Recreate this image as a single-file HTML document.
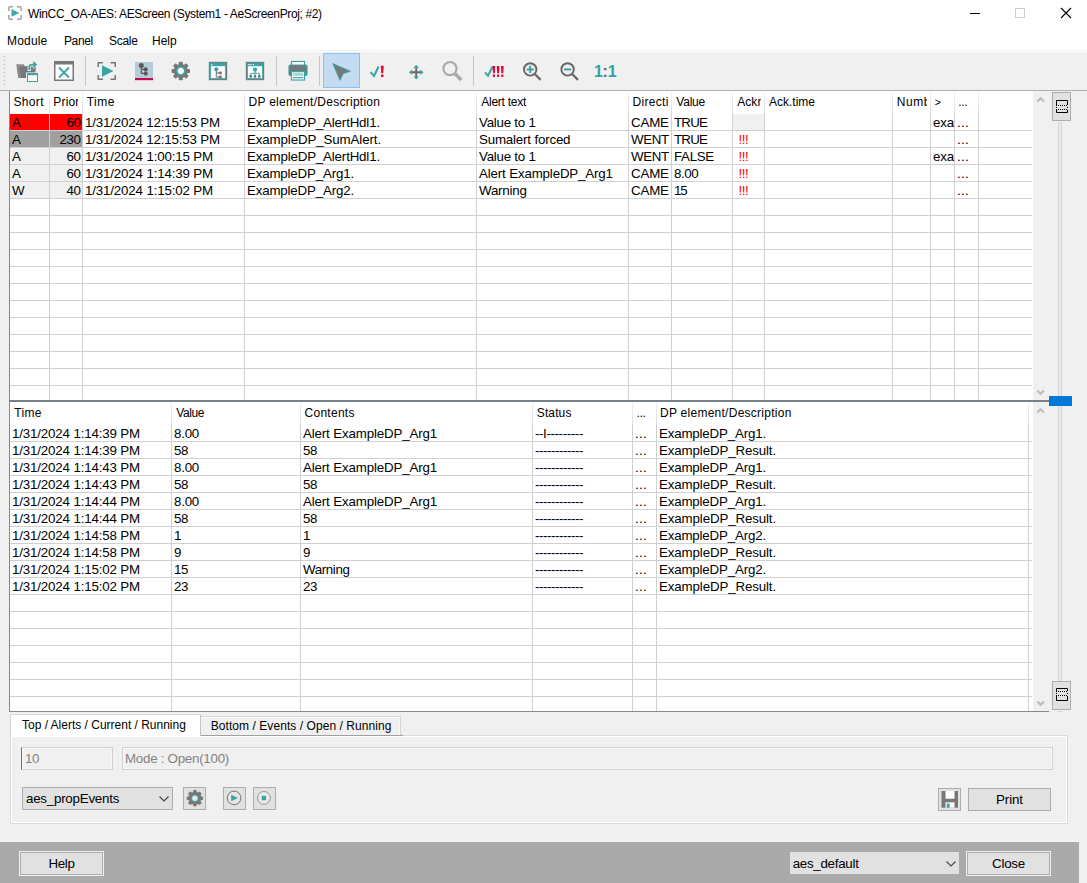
<!DOCTYPE html>
<html><head><meta charset="utf-8"><title>WinCC_OA-AES: AEScreen</title>
<style>
html,body{margin:0;padding:0;}
body{width:1087px;height:883px;overflow:hidden;background:#f0f0f0;position:relative;font-family:"Liberation Sans",sans-serif;font-size:13.333px;color:#000;}
.abs{position:absolute;}
.t{position:absolute;white-space:nowrap;line-height:17px;height:17px;}
.h{overflow:hidden;}
.hl{position:absolute;height:1px;background:#d0d0d0;}
.vl{position:absolute;width:1px;background:#d0d0d0;}
.vh{position:absolute;width:1px;background:linear-gradient(#f4f4f4,#dcdcdc);}
.btn{position:absolute;box-sizing:border-box;border:1px solid #adadad;background:#e1e1e1;text-align:center;}
.sep{position:absolute;width:1px;top:56px;height:30px;background:#c6c6c6;}
svg{position:absolute;overflow:visible;}
</style></head><body>

<div class="abs" style="left:0;top:0;width:1087px;height:52px;background:#fff"></div>
<div class="abs" style="left:0;top:50px;width:1087px;height:1px;background:#f0f0f0"></div>
<svg style="left:8px;top:6px" width="14" height="14" viewBox="0 0 14 14"><path d="M0.8 5V2Q0.8 0.8 2 0.8H5M9 0.8H12Q13.2 0.8 13.2 2V5M13.2 9V12Q13.2 13.2 12 13.2H9M5 13.2H2Q0.8 13.2 0.8 12V9" fill="none" stroke="#a4a4a4" stroke-width="1.5"/><path d="M3.5 3L11.3 7L3.5 10.8Z" fill="#41a9a7"/></svg>
<div class="t" id="title" style="left:28px;top:6px;font-size:12px;letter-spacing:-0.36px">WinCC_OA-AES: AEScreen (System1 - AeScreenProj; #2)</div>
<div class="abs" style="left:970px;top:13px;width:10px;height:1px;background:#000"></div>
<div class="abs" style="left:1015px;top:8px;width:10px;height:10px;box-sizing:border-box;border:1px solid #ccc"></div>
<svg style="left:1061px;top:8px" width="10" height="10" viewBox="0 0 10 10"><path d="M0 0L10 10M10 0L0 10" stroke="#000" stroke-width="1.1" fill="none"/></svg>
<div class="t menu" style="left:7px;top:33px;font-size:12px;letter-spacing:0.18px">Module</div>
<div class="t menu" style="left:64px;top:33px;font-size:12px;letter-spacing:-0.4px">Panel</div>
<div class="t menu" style="left:109px;top:33px;font-size:12px;letter-spacing:-0.3px">Scale</div>
<div class="t menu" style="left:152px;top:33px;font-size:12px;letter-spacing:0px">Help</div>
<div class="abs" style="left:0;top:52px;width:1087px;height:38px;background:#f0f0f0"></div>
<div class="abs" style="left:0;top:90px;width:1087px;height:1px;background:#b0b0b0"></div>
<div class="abs" style="left:3px;top:55px;width:2px;height:2px;background:#fff"></div><div class="abs" style="left:4px;top:56px;width:1px;height:1px;background:#c2c2c2"></div><div class="abs" style="left:3px;top:56px;width:1px;height:1px;background:#d4d4d4"></div><div class="abs" style="left:4px;top:55px;width:1px;height:1px;background:#d4d4d4"></div>
<div class="abs" style="left:3px;top:59px;width:2px;height:2px;background:#fff"></div><div class="abs" style="left:4px;top:60px;width:1px;height:1px;background:#c2c2c2"></div><div class="abs" style="left:3px;top:60px;width:1px;height:1px;background:#d4d4d4"></div><div class="abs" style="left:4px;top:59px;width:1px;height:1px;background:#d4d4d4"></div>
<div class="abs" style="left:3px;top:63px;width:2px;height:2px;background:#fff"></div><div class="abs" style="left:4px;top:64px;width:1px;height:1px;background:#c2c2c2"></div><div class="abs" style="left:3px;top:64px;width:1px;height:1px;background:#d4d4d4"></div><div class="abs" style="left:4px;top:63px;width:1px;height:1px;background:#d4d4d4"></div>
<div class="abs" style="left:3px;top:67px;width:2px;height:2px;background:#fff"></div><div class="abs" style="left:4px;top:68px;width:1px;height:1px;background:#c2c2c2"></div><div class="abs" style="left:3px;top:68px;width:1px;height:1px;background:#d4d4d4"></div><div class="abs" style="left:4px;top:67px;width:1px;height:1px;background:#d4d4d4"></div>
<div class="abs" style="left:3px;top:71px;width:2px;height:2px;background:#fff"></div><div class="abs" style="left:4px;top:72px;width:1px;height:1px;background:#c2c2c2"></div><div class="abs" style="left:3px;top:72px;width:1px;height:1px;background:#d4d4d4"></div><div class="abs" style="left:4px;top:71px;width:1px;height:1px;background:#d4d4d4"></div>
<div class="abs" style="left:3px;top:75px;width:2px;height:2px;background:#fff"></div><div class="abs" style="left:4px;top:76px;width:1px;height:1px;background:#c2c2c2"></div><div class="abs" style="left:3px;top:76px;width:1px;height:1px;background:#d4d4d4"></div><div class="abs" style="left:4px;top:75px;width:1px;height:1px;background:#d4d4d4"></div>
<div class="abs" style="left:3px;top:79px;width:2px;height:2px;background:#fff"></div><div class="abs" style="left:4px;top:80px;width:1px;height:1px;background:#c2c2c2"></div><div class="abs" style="left:3px;top:80px;width:1px;height:1px;background:#d4d4d4"></div><div class="abs" style="left:4px;top:79px;width:1px;height:1px;background:#d4d4d4"></div>
<div class="abs" style="left:3px;top:83px;width:2px;height:2px;background:#fff"></div><div class="abs" style="left:4px;top:84px;width:1px;height:1px;background:#c2c2c2"></div><div class="abs" style="left:3px;top:84px;width:1px;height:1px;background:#d4d4d4"></div><div class="abs" style="left:4px;top:83px;width:1px;height:1px;background:#d4d4d4"></div>
<div class="sep" style="left:85px"></div>
<div class="sep" style="left:276px"></div>
<div class="sep" style="left:319px"></div>
<div class="sep" style="left:473px"></div>
<!-- toolbar icons -->
<svg style="left:0;top:0" width="1087" height="90" viewBox="0 0 1087 90">
<!-- 1 open folder w/ arrow + window -->
<g>
<path d="M16.5 64.3H23.6l1.2 2H33.4v4H17Z" fill="#8c8c8c"/>
<path d="M19.2 66.4H36L34.6 78H18.4L17.2 70Z" fill="#777"/>
<path d="M16.5 64.3L18.4 78H21L19.4 66.4Z" fill="#8a8a8a"/>
<path d="M29.2 71v-3.4q0-3 3-3h1.6" fill="none" stroke="#f0f0f0" stroke-width="3.4"/>
<path d="M32.9 60L38.3 64.6L32.9 69.2Z" fill="#f0f0f0"/>
<path d="M29.2 70v-2.6q0-2.8 2.8-2.8h1.8" fill="none" stroke="#3aa5a5" stroke-width="1.7"/>
<path d="M33.3 61L37.2 64.6L33.3 68.2Z" fill="#3aa5a5"/>
<rect x="26" y="72.4" width="12.6" height="10.2" fill="#f0f0f0"/>
<rect x="27.5" y="73.5" width="10" height="8" fill="#fff" stroke="#3aa5a5" stroke-width="1"/>
<rect x="27" y="73" width="11" height="2.2" fill="#3aa5a5"/>
</g>
<!-- 2 window with X -->
<g>
<rect x="54.75" y="61.75" width="18.5" height="18.5" fill="#fff" stroke="#777" stroke-width="1.5"/>
<rect x="54" y="61" width="20" height="3.5" fill="#777"/>
<path d="M59 67.5L69 77.5M69 67.5L59 77.5" stroke="#3aa5a5" stroke-width="1.9" fill="none"/>
</g>
<!-- 3 bracket play -->
<g>
<path d="M98.25 67V62.75H103M110.5 62.75H115.25V67M115.25 75V79.25H110.5M103 79.25H98.25V75" fill="none" stroke="#777" stroke-width="1.5"/>
<path d="M102 65.2L113.5 71L102 76.8Z" fill="#3aa5a5"/>
</g>
<!-- 4 tree on blue -->
<g>
<rect x="135" y="62" width="18" height="16.5" fill="#b6ccd9"/>
<rect x="135" y="78" width="18" height="2.2" fill="#c4074f"/>
<path d="M141.3 66V73.4H145M141.3 69.4H145" fill="none" stroke="#5a5a5a" stroke-width="1.1"/>
<circle cx="141.3" cy="65.6" r="2.5" fill="#5a5a5a"/>
<circle cx="145.7" cy="69.4" r="2.1" fill="#5a5a5a"/>
<circle cx="145.7" cy="73.6" r="2.1" fill="#5a5a5a"/>
</g>
<!-- 5 gear -->
<g transform="translate(180.8 71)">
<g fill="#777">
<circle r="7.1"/>
<rect x="-2" y="-9.2" width="4" height="18.4" rx="0.8"/>
<rect x="-2" y="-9.2" width="4" height="18.4" rx="0.8" transform="rotate(45)"/>
<rect x="-2" y="-9.2" width="4" height="18.4" rx="0.8" transform="rotate(90)"/>
<rect x="-2" y="-9.2" width="4" height="18.4" rx="0.8" transform="rotate(135)"/>
</g>
<circle r="4" fill="#fff" stroke="#3aa5a5" stroke-width="1.7"/>
</g>
<!-- 6 window with tree -->
<g>
<rect x="209.5" y="62.5" width="17" height="17" fill="#fff" stroke="#6a7f7f" stroke-width="1.4"/><rect x="210.6" y="63.6" width="14.8" height="14.8" fill="none" stroke="#3aa5a5" stroke-width="0.9"/>
<rect x="210" y="63" width="16" height="3.2" fill="#3aa5a5"/>
<rect x="211.3" y="64" width="1.2" height="1.2" fill="#fff"/>
<path d="M216.3 70V77H219M216.3 73H219" fill="none" stroke="#777" stroke-width="1.1"/>
<circle cx="216.3" cy="69.3" r="2.1" fill="#3aa5a5"/>
<rect x="218.6" y="71.6" width="3.2" height="2.6" fill="#777"/>
<rect x="218.6" y="75.6" width="3.2" height="2.6" fill="#777"/>
</g>
<!-- 7 window with org chart -->
<g>
<rect x="246.5" y="62.5" width="17" height="17" fill="#fff" stroke="#6a7f7f" stroke-width="1.4"/><rect x="247.6" y="63.6" width="14.8" height="14.8" fill="none" stroke="#3aa5a5" stroke-width="0.9"/>
<rect x="247" y="63" width="16" height="3.2" fill="#3aa5a5"/>
<rect x="248.3" y="64" width="1.2" height="1.2" fill="#fff"/><rect x="250.3" y="64" width="1.2" height="1.2" fill="#fff"/><rect x="252.8" y="64" width="1.2" height="1.2" fill="#fff"/>
<path d="M255 70V75M250.7 75.5V73.3H259.3V75.5" fill="none" stroke="#3aa5a5" stroke-width="1"/>
<circle cx="255" cy="69.6" r="2.1" fill="#3aa5a5"/>
<rect x="249.5" y="75.2" width="2.4" height="2.4" fill="#666"/>
<rect x="253.79999999999998" y="75.2" width="2.4" height="2.4" fill="#666"/>
<rect x="258.09999999999997" y="75.2" width="2.4" height="2.4" fill="#666"/>
</g>
<!-- 8 printer -->
<g>
<rect x="291.5" y="61.5" width="13" height="5" fill="#fff" stroke="#3aa5a5" stroke-width="1.2"/>
<rect x="289" y="65" width="18" height="10.5" rx="1.5" fill="#777" stroke="#3aa5a5" stroke-width="1.2"/>
<rect x="291.5" y="71.5" width="13" height="8.5" fill="#fff" stroke="#3aa5a5" stroke-width="1.2"/>
<rect x="292.8" y="72.5" width="10.4" height="3.4" fill="#a5d8d6"/>
<rect x="293" y="77" width="10" height="1.2" fill="#3aa5a5"/>
</g>
<!-- 9 selected + arrow -->
<g>
<rect x="323.5" y="53.5" width="36" height="34" fill="#c4dcf2" stroke="#8cc0f0" stroke-width="1"/>
<path d="M332.8 63.6L350.4 71.2L343.2 73.6L340 80.3Z" fill="#777" stroke="#3aa5a5" stroke-width="0.9" stroke-linejoin="round"/>
</g>
<!-- 10 check ! -->
<g>
<path d="M370.6 72.3L374 76L378.6 66.5" fill="none" stroke="#3aa5a5" stroke-width="2"/>
<path d="M380.8 65.8h2.9l-0.5 7.4h-1.9Z" fill="#e6003c"/><rect x="381" y="74.6" width="2.5" height="2.4" fill="#e6003c"/>
</g>
<!-- 11 move -->
<g>
<path d="M411.5 72.2H421M416.2 67.5V77" stroke="#666" stroke-width="1.9" fill="none"/>
<path d="M408.8 72.2L412 69.4V75ZM423.6 72.2L420.4 69.4V75ZM416.2 64.8L413.4 68H419ZM416.2 79.6L413.4 76.4H419Z" fill="#3aa5a5"/>
</g>
<!-- 12 magnifier disabled -->
<g>
<circle cx="450" cy="68.6" r="6.6" fill="none" stroke="#a9a9a9" stroke-width="2.2"/>
<path d="M455 73.8L461.3 80" stroke="#a9a9a9" stroke-width="3.4" fill="none"/>
</g>
<!-- 13 check !!! -->
<g>
<path d="M485 72.3L488 75.8L492.6 66.5" fill="none" stroke="#3aa5a5" stroke-width="2"/>
<g fill="#e6003c">
<path d="M492.6 66h2.6l-0.4 7.2h-1.8Z"/><rect x="492.8" y="74.6" width="2.2" height="2.3"/>
<path d="M496.8 66h2.6l-0.4 7.2h-1.8Z"/><rect x="497" y="74.6" width="2.2" height="2.3"/>
<path d="M501 66h2.6l-0.4 7.2h-1.8Z"/><rect x="501.2" y="74.6" width="2.2" height="2.3"/>
</g>
</g>
<!-- 14 zoom in -->
<g>
<circle cx="530.2" cy="69.4" r="6.2" fill="none" stroke="#666" stroke-width="1.9"/>
<path d="M535 74.3L540.6 79.9" stroke="#666" stroke-width="2.2" fill="none"/>
<path d="M526.6 69.4H533.8M530.2 65.8V73" stroke="#3aa5a5" stroke-width="2" fill="none"/>
</g>
<!-- 15 zoom out -->
<g>
<circle cx="567.6" cy="69.4" r="6.2" fill="none" stroke="#666" stroke-width="1.9"/>
<path d="M572.4 74.3L578 79.9" stroke="#666" stroke-width="2.2" fill="none"/>
<path d="M564 69.4H571.2" stroke="#3aa5a5" stroke-width="2" fill="none"/>
</g>
</svg>
<div class="t" style="left:594px;top:62px;height:20px;line-height:20px;font-size:16px;font-weight:bold;color:#2fa3a3;letter-spacing:-0.3px">1<span style="color:#666">:</span>1</div>

<div class="abs" id="utab" style="left:9px;top:91px;width:1024px;height:309px;background:#fff;border-left:1px solid #828790;box-sizing:border-box"></div>
<div class="t h" style="left:13.56px;top:94px;font-size:12px;letter-spacing:0.312px;width:32px;">Short</div>
<div class="t h" style="left:53.32px;top:94px;font-size:12px;letter-spacing:0.166px;width:25px;">Priori</div>
<div class="t h" style="left:86.63px;top:94px;font-size:12px;letter-spacing:0.512px;width:154px;">Time</div>
<div class="t h" style="left:248.62px;top:94px;font-size:12px;letter-spacing:0.262px;width:224px;">DP element/Description</div>
<div class="t h" style="left:481.28px;top:94px;font-size:12px;letter-spacing:-0.249px;width:144px;">Alert text</div>
<div class="t h" style="left:632.62px;top:94px;font-size:12px;letter-spacing:0.281px;width:35px;">Directi</div>
<div class="t h" style="left:676.25px;top:94px;font-size:12px;letter-spacing:-0.202px;width:53px;">Value</div>
<div class="t h" style="left:737.18px;top:94px;font-size:12px;letter-spacing:0.081px;width:24px;">Ackn</div>
<div class="t h" style="left:768.98px;top:94px;font-size:12px;width:120px;">Ack.time</div>
<div class="t h" style="left:896.77px;top:94px;font-size:12px;letter-spacing:0.55px;width:30px;">Numb</div>
<div class="t h" style="left:934.78px;top:93.6px;font-size:10.5px;letter-spacing:-0.132px;">&gt;</div>
<div class="t h" style="left:958.3px;top:94px;font-size:12px;letter-spacing:-0.334px;width:16px;">...</div>
<div class="vh" style="left:49px;top:91px;height:23px"></div>
<div class="vl" style="left:49px;top:114px;height:286px"></div>
<div class="vh" style="left:82px;top:91px;height:23px"></div>
<div class="vl" style="left:82px;top:114px;height:286px"></div>
<div class="vh" style="left:244px;top:91px;height:23px"></div>
<div class="vl" style="left:244px;top:114px;height:286px"></div>
<div class="vh" style="left:476px;top:91px;height:23px"></div>
<div class="vl" style="left:476px;top:114px;height:286px"></div>
<div class="vh" style="left:628px;top:91px;height:23px"></div>
<div class="vl" style="left:628px;top:114px;height:286px"></div>
<div class="vh" style="left:671px;top:91px;height:23px"></div>
<div class="vl" style="left:671px;top:114px;height:286px"></div>
<div class="vh" style="left:732px;top:91px;height:23px"></div>
<div class="vl" style="left:732px;top:114px;height:286px"></div>
<div class="vh" style="left:764px;top:91px;height:23px"></div>
<div class="vl" style="left:764px;top:114px;height:286px"></div>
<div class="vh" style="left:892px;top:91px;height:23px"></div>
<div class="vl" style="left:892px;top:114px;height:286px"></div>
<div class="vh" style="left:930px;top:91px;height:23px"></div>
<div class="vl" style="left:930px;top:114px;height:286px"></div>
<div class="vh" style="left:954px;top:91px;height:23px"></div>
<div class="vl" style="left:954px;top:114px;height:286px"></div>
<div class="vh" style="left:978px;top:91px;height:23px"></div>
<div class="vl" style="left:978px;top:114px;height:286px"></div>
<div class="hl" style="left:10px;top:130px;width:1022px"></div>
<div class="hl" style="left:10px;top:147px;width:1022px"></div>
<div class="hl" style="left:10px;top:164px;width:1022px"></div>
<div class="hl" style="left:10px;top:181px;width:1022px"></div>
<div class="hl" style="left:10px;top:198px;width:1022px"></div>
<div class="hl" style="left:10px;top:215px;width:1022px"></div>
<div class="hl" style="left:10px;top:232px;width:1022px"></div>
<div class="hl" style="left:10px;top:249px;width:1022px"></div>
<div class="hl" style="left:10px;top:266px;width:1022px"></div>
<div class="hl" style="left:10px;top:283px;width:1022px"></div>
<div class="hl" style="left:10px;top:300px;width:1022px"></div>
<div class="hl" style="left:10px;top:317px;width:1022px"></div>
<div class="hl" style="left:10px;top:334px;width:1022px"></div>
<div class="hl" style="left:10px;top:351px;width:1022px"></div>
<div class="hl" style="left:10px;top:368px;width:1022px"></div>
<div class="hl" style="left:10px;top:385px;width:1022px"></div>
<div class="abs" style="left:733px;top:114px;width:31px;height:16px;background:#f0f0f0"></div>
<div class="abs" style="left:10px;top:114px;width:39px;height:16px;background:#ff0000"></div>
<div class="abs" style="left:50px;top:114px;width:32px;height:16px;background:#ff0000"></div>
<div class="t" style="left:12px;top:114px;letter-spacing:0.107px;">A</div>
<div class="t" style="left:49px;top:114px;letter-spacing:-0.415px;width:31.4px;text-align:right;">60</div>
<div class="t" style="left:85px;top:114px;letter-spacing:-0.173px;">1/31/2024 12:15:53 PM</div>
<div class="t" style="left:247px;top:114px;letter-spacing:-0.168px;">ExampleDP_AlertHdl1.</div>
<div class="t" style="left:479px;top:114px;letter-spacing:-0.244px;">Value to 1</div>
<div class="t" style="left:631px;top:114px;letter-spacing:-0.183px;">CAME</div>
<div class="t" style="left:674px;top:114px;letter-spacing:-0.807px;">TRUE</div>
<div class="t" style="left:933px;top:114px;letter-spacing:-0.166px;">exa</div>
<div class="t" style="left:957px;top:114px;letter-spacing:0.296px;">...</div>
<div class="abs" style="left:10px;top:131px;width:39px;height:16px;background:#a0a0a0"></div>
<div class="abs" style="left:50px;top:131px;width:32px;height:16px;background:#a0a0a0"></div>
<div class="t" style="left:12px;top:131px;letter-spacing:0.107px;">A</div>
<div class="t" style="left:49px;top:131px;letter-spacing:-0.415px;width:31.4px;text-align:right;">230</div>
<div class="t" style="left:85px;top:131px;letter-spacing:-0.173px;">1/31/2024 12:15:53 PM</div>
<div class="t" style="left:247px;top:131px;letter-spacing:-0.123px;">ExampleDP_SumAlert.</div>
<div class="t" style="left:479px;top:131px;letter-spacing:-0.182px;">Sumalert forced</div>
<div class="t" style="left:631px;top:131px;letter-spacing:-0.381px;">WENT</div>
<div class="t" style="left:674px;top:131px;letter-spacing:-0.807px;">TRUE</div>
<div class="t" style="left:738.4px;top:131px;letter-spacing:-0.401px;color:#ff0000">!!!</div>
<div class="t" style="left:957px;top:131px;letter-spacing:0.296px;">...</div>
<div class="abs" style="left:10px;top:148px;width:39px;height:16px;background:#f0f0f0"></div>
<div class="abs" style="left:50px;top:148px;width:32px;height:16px;background:#f0f0f0"></div>
<div class="t" style="left:12px;top:148px;letter-spacing:0.107px;">A</div>
<div class="t" style="left:49px;top:148px;letter-spacing:-0.415px;width:31.4px;text-align:right;">60</div>
<div class="t" style="left:85px;top:148px;letter-spacing:-0.16px;">1/31/2024 1:00:15 PM</div>
<div class="t" style="left:247px;top:148px;letter-spacing:-0.168px;">ExampleDP_AlertHdl1.</div>
<div class="t" style="left:479px;top:148px;letter-spacing:-0.244px;">Value to 1</div>
<div class="t" style="left:631px;top:148px;letter-spacing:-0.381px;">WENT</div>
<div class="t" style="left:674px;top:148px;letter-spacing:-0.316px;">FALSE</div>
<div class="t" style="left:738.4px;top:148px;letter-spacing:-0.401px;color:#ff0000">!!!</div>
<div class="t" style="left:933px;top:148px;letter-spacing:-0.166px;">exa</div>
<div class="t" style="left:957px;top:148px;letter-spacing:0.296px;">...</div>
<div class="abs" style="left:10px;top:165px;width:39px;height:16px;background:#f0f0f0"></div>
<div class="abs" style="left:50px;top:165px;width:32px;height:16px;background:#f0f0f0"></div>
<div class="t" style="left:12px;top:165px;letter-spacing:0.107px;">A</div>
<div class="t" style="left:49px;top:165px;letter-spacing:-0.415px;width:31.4px;text-align:right;">60</div>
<div class="t" style="left:85px;top:165px;letter-spacing:-0.16px;">1/31/2024 1:14:39 PM</div>
<div class="t" style="left:247px;top:165px;letter-spacing:-0.179px;">ExampleDP_Arg1.</div>
<div class="t" style="left:479px;top:165px;letter-spacing:-0.16px;">Alert ExampleDP_Arg1</div>
<div class="t" style="left:631px;top:165px;letter-spacing:-0.183px;">CAME</div>
<div class="t" style="left:674px;top:165px;letter-spacing:-0.41px;">8.00</div>
<div class="t" style="left:738.4px;top:165px;letter-spacing:-0.401px;color:#ff0000">!!!</div>
<div class="t" style="left:957px;top:165px;letter-spacing:0.296px;">...</div>
<div class="abs" style="left:10px;top:182px;width:39px;height:16px;background:#f0f0f0"></div>
<div class="abs" style="left:50px;top:182px;width:32px;height:16px;background:#f0f0f0"></div>
<div class="t" style="left:12px;top:182px;letter-spacing:-0.584px;">W</div>
<div class="t" style="left:49px;top:182px;letter-spacing:-0.415px;width:31.4px;text-align:right;">40</div>
<div class="t" style="left:85px;top:182px;letter-spacing:-0.16px;">1/31/2024 1:15:02 PM</div>
<div class="t" style="left:247px;top:182px;letter-spacing:-0.179px;">ExampleDP_Arg2.</div>
<div class="t" style="left:479px;top:182px;letter-spacing:-0.198px;">Warning</div>
<div class="t" style="left:631px;top:182px;letter-spacing:-0.183px;">CAME</div>
<div class="t" style="left:674px;top:182px;letter-spacing:-1.27px;">15</div>
<div class="t" style="left:738.4px;top:182px;letter-spacing:-0.401px;color:#ff0000">!!!</div>
<div class="t" style="left:957px;top:182px;letter-spacing:0.296px;">...</div>
<svg style="left:1037px;top:96px" width="8" height="7" viewBox="0 0 8 7"><path d="M0.3 5.6L3.6 2.3L6.9 5.6" fill="none" stroke="#bcbcbc" stroke-width="2.1"/></svg>
<svg style="left:1037px;top:389px" width="8" height="7" viewBox="0 0 8 7"><path d="M0.3 1.4L3.6 4.7L6.9 1.4" fill="none" stroke="#bcbcbc" stroke-width="2.1"/></svg>
<svg style="left:1037px;top:407px" width="8" height="7" viewBox="0 0 8 7"><path d="M0.3 5.6L3.6 2.3L6.9 5.6" fill="none" stroke="#bcbcbc" stroke-width="2.1"/></svg>
<svg style="left:1037px;top:700px" width="8" height="7" viewBox="0 0 8 7"><path d="M0.3 1.4L3.6 4.7L6.9 1.4" fill="none" stroke="#bcbcbc" stroke-width="2.1"/></svg>
<div class="abs" style="left:1058px;top:122px;width:4px;height:559px;box-sizing:border-box;background:#e7eaea;border-left:1px solid #d6d6d6;border-right:1px solid #d6d6d6"></div>
<div class="abs" style="left:1058px;top:711px;width:4px;height:1px;background:#d6d6d6"></div>
<div class="btn" style="left:1052px;top:92px;width:19px;height:29px"></div>
<div class="btn" style="left:1052px;top:681px;width:19px;height:29px"></div>
<svg style="left:1056px;top:100px" width="12" height="13" viewBox="0 0 12 13"><path d="M0.5 5V0.5H11.5V5M0.5 10V12.5H11.5V10" fill="none" stroke="#000" stroke-width="1"/><path d="M0 5.5H12M0 9.5H12" stroke="#000" stroke-width="1" stroke-dasharray="1 1" fill="none"/><path d="M0.5 7v1M11.5 7v1" stroke="#000"/></svg>
<svg style="left:1056px;top:688px" width="12" height="13" viewBox="0 0 12 13"><path d="M0.5 3V0.5H11.5V3M0.5 8V12.5H11.5V8" fill="none" stroke="#000" stroke-width="1"/><path d="M0 3.5H12M0 7.5H12" stroke="#000" stroke-width="1" stroke-dasharray="1 1" fill="none"/><path d="M0.5 5v1M11.5 5v1" stroke="#000"/></svg>
<div class="abs" style="left:9px;top:400px;width:1040px;height:2px;background:#7a8088"></div>
<div class="abs" style="left:1049px;top:396px;width:23px;height:10px;background:#0078d7"></div>
<div class="abs" id="ltab" style="left:9px;top:402px;width:1024px;height:309px;background:#fff;border-left:1px solid #828790;box-sizing:border-box"></div>
<div class="abs" style="left:9px;top:711px;width:1040px;height:1px;background:#828790"></div>
<div class="t" style="left:14.23px;top:405px;font-size:12px;letter-spacing:0.312px;">Time</div>
<div class="t" style="left:176.15px;top:405px;font-size:12px;letter-spacing:-0.377px;">Value</div>
<div class="t" style="left:304.59px;top:405px;font-size:12px;letter-spacing:0.259px;">Contents</div>
<div class="t" style="left:536.76px;top:405px;font-size:12px;letter-spacing:0.131px;">Status</div>
<div class="t" style="left:636.4px;top:405px;font-size:12px;letter-spacing:-0.334px;">...</div>
<div class="t" style="left:660.02px;top:405px;font-size:12px;letter-spacing:0.262px;">DP element/Description</div>
<div class="vh" style="left:171px;top:402px;height:23px"></div>
<div class="vl" style="left:171px;top:425px;height:286px"></div>
<div class="vh" style="left:300px;top:402px;height:23px"></div>
<div class="vl" style="left:300px;top:425px;height:286px"></div>
<div class="vh" style="left:532px;top:402px;height:23px"></div>
<div class="vl" style="left:532px;top:425px;height:286px"></div>
<div class="vh" style="left:632px;top:402px;height:23px"></div>
<div class="vl" style="left:632px;top:425px;height:286px"></div>
<div class="vh" style="left:656px;top:402px;height:23px"></div>
<div class="vl" style="left:656px;top:425px;height:286px"></div>
<div class="vh" style="left:1028px;top:402px;height:23px"></div>
<div class="vl" style="left:1028px;top:425px;height:286px"></div>
<div class="hl" style="left:10px;top:441px;width:1022px"></div>
<div class="hl" style="left:10px;top:458px;width:1022px"></div>
<div class="hl" style="left:10px;top:475px;width:1022px"></div>
<div class="hl" style="left:10px;top:492px;width:1022px"></div>
<div class="hl" style="left:10px;top:509px;width:1022px"></div>
<div class="hl" style="left:10px;top:526px;width:1022px"></div>
<div class="hl" style="left:10px;top:543px;width:1022px"></div>
<div class="hl" style="left:10px;top:560px;width:1022px"></div>
<div class="hl" style="left:10px;top:577px;width:1022px"></div>
<div class="hl" style="left:10px;top:594px;width:1022px"></div>
<div class="hl" style="left:10px;top:611px;width:1022px"></div>
<div class="hl" style="left:10px;top:628px;width:1022px"></div>
<div class="hl" style="left:10px;top:645px;width:1022px"></div>
<div class="hl" style="left:10px;top:662px;width:1022px"></div>
<div class="hl" style="left:10px;top:679px;width:1022px"></div>
<div class="hl" style="left:10px;top:696px;width:1022px"></div>
<div class="t" style="left:12px;top:425px;letter-spacing:-0.16px;">1/31/2024 1:14:39 PM</div>
<div class="t" style="left:174px;top:425px;letter-spacing:-0.237px;">8.00</div>
<div class="t" style="left:303px;top:425px;letter-spacing:-0.155px;">Alert ExampleDP_Arg1</div>
<div class="t" style="left:535px;top:425px;letter-spacing:-0.379px;">--I---------</div>
<div class="t" style="left:635px;top:425px;letter-spacing:0.296px;">...</div>
<div class="t" style="left:659px;top:425px;letter-spacing:-0.179px;">ExampleDP_Arg1.</div>
<div class="t" style="left:12px;top:442px;letter-spacing:-0.16px;">1/31/2024 1:14:39 PM</div>
<div class="t" style="left:174px;top:442px;letter-spacing:-0.415px;">58</div>
<div class="t" style="left:303px;top:442px;letter-spacing:-0.415px;">58</div>
<div class="t" style="left:535px;top:442px;letter-spacing:-0.44px;">------------</div>
<div class="t" style="left:635px;top:442px;letter-spacing:0.296px;">...</div>
<div class="t" style="left:659px;top:442px;letter-spacing:-0.136px;">ExampleDP_Result.</div>
<div class="t" style="left:12px;top:459px;letter-spacing:-0.16px;">1/31/2024 1:14:43 PM</div>
<div class="t" style="left:174px;top:459px;letter-spacing:-0.237px;">8.00</div>
<div class="t" style="left:303px;top:459px;letter-spacing:-0.155px;">Alert ExampleDP_Arg1</div>
<div class="t" style="left:535px;top:459px;letter-spacing:-0.44px;">------------</div>
<div class="t" style="left:635px;top:459px;letter-spacing:0.296px;">...</div>
<div class="t" style="left:659px;top:459px;letter-spacing:-0.179px;">ExampleDP_Arg1.</div>
<div class="t" style="left:12px;top:476px;letter-spacing:-0.16px;">1/31/2024 1:14:43 PM</div>
<div class="t" style="left:174px;top:476px;letter-spacing:-0.415px;">58</div>
<div class="t" style="left:303px;top:476px;letter-spacing:-0.415px;">58</div>
<div class="t" style="left:535px;top:476px;letter-spacing:-0.44px;">------------</div>
<div class="t" style="left:635px;top:476px;letter-spacing:0.296px;">...</div>
<div class="t" style="left:659px;top:476px;letter-spacing:-0.136px;">ExampleDP_Result.</div>
<div class="t" style="left:12px;top:493px;letter-spacing:-0.16px;">1/31/2024 1:14:44 PM</div>
<div class="t" style="left:174px;top:493px;letter-spacing:-0.237px;">8.00</div>
<div class="t" style="left:303px;top:493px;letter-spacing:-0.155px;">Alert ExampleDP_Arg1</div>
<div class="t" style="left:535px;top:493px;letter-spacing:-0.44px;">------------</div>
<div class="t" style="left:635px;top:493px;letter-spacing:0.296px;">...</div>
<div class="t" style="left:659px;top:493px;letter-spacing:-0.179px;">ExampleDP_Arg1.</div>
<div class="t" style="left:12px;top:510px;letter-spacing:-0.16px;">1/31/2024 1:14:44 PM</div>
<div class="t" style="left:174px;top:510px;letter-spacing:-0.415px;">58</div>
<div class="t" style="left:303px;top:510px;letter-spacing:-0.415px;">58</div>
<div class="t" style="left:535px;top:510px;letter-spacing:-0.44px;">------------</div>
<div class="t" style="left:635px;top:510px;letter-spacing:0.296px;">...</div>
<div class="t" style="left:659px;top:510px;letter-spacing:-0.136px;">ExampleDP_Result.</div>
<div class="t" style="left:12px;top:527px;letter-spacing:-0.16px;">1/31/2024 1:14:58 PM</div>
<div class="t" style="left:174px;top:527px;letter-spacing:-0.415px;">1</div>
<div class="t" style="left:303px;top:527px;letter-spacing:-0.415px;">1</div>
<div class="t" style="left:535px;top:527px;letter-spacing:-0.44px;">------------</div>
<div class="t" style="left:635px;top:527px;letter-spacing:0.296px;">...</div>
<div class="t" style="left:659px;top:527px;letter-spacing:-0.179px;">ExampleDP_Arg2.</div>
<div class="t" style="left:12px;top:544px;letter-spacing:-0.16px;">1/31/2024 1:14:58 PM</div>
<div class="t" style="left:174px;top:544px;letter-spacing:-0.415px;">9</div>
<div class="t" style="left:303px;top:544px;letter-spacing:-0.415px;">9</div>
<div class="t" style="left:535px;top:544px;letter-spacing:-0.44px;">------------</div>
<div class="t" style="left:635px;top:544px;letter-spacing:0.296px;">...</div>
<div class="t" style="left:659px;top:544px;letter-spacing:-0.136px;">ExampleDP_Result.</div>
<div class="t" style="left:12px;top:561px;letter-spacing:-0.16px;">1/31/2024 1:15:02 PM</div>
<div class="t" style="left:174px;top:561px;letter-spacing:-0.415px;">15</div>
<div class="t" style="left:303px;top:561px;letter-spacing:-0.378px;">Warning</div>
<div class="t" style="left:535px;top:561px;letter-spacing:-0.44px;">------------</div>
<div class="t" style="left:635px;top:561px;letter-spacing:0.296px;">...</div>
<div class="t" style="left:659px;top:561px;letter-spacing:-0.179px;">ExampleDP_Arg2.</div>
<div class="t" style="left:12px;top:578px;letter-spacing:-0.16px;">1/31/2024 1:15:02 PM</div>
<div class="t" style="left:174px;top:578px;letter-spacing:-0.415px;">23</div>
<div class="t" style="left:303px;top:578px;letter-spacing:-0.415px;">23</div>
<div class="t" style="left:535px;top:578px;letter-spacing:-0.44px;">------------</div>
<div class="t" style="left:635px;top:578px;letter-spacing:0.296px;">...</div>
<div class="t" style="left:659px;top:578px;letter-spacing:-0.136px;">ExampleDP_Result.</div>
<div class="abs" style="left:10px;top:735px;width:1058px;height:89px;box-sizing:border-box;border:1px solid #dadada;background:#f0f0f0;box-shadow:inset 1px 1px 0 #fff,inset -1px -1px 0 #fff"></div>
<div class="abs" style="left:10px;top:714px;width:191px;height:22px;box-sizing:border-box;border:1px solid #dadada;border-right-color:#c4c4c4;border-bottom:none;background:#fff"></div>
<div class="t" style="left:21.98px;top:717px;font-size:12px;letter-spacing:-0.006px;">Top / Alerts / Current / Running</div>
<div class="abs" style="left:201px;top:716px;width:200px;height:19px;box-sizing:border-box;border-top:1px solid #d6d6d6;border-right:1px solid #d6d6d6;background:#f0f0f0;box-shadow:inset -1px 1px 0 #f8f8f8"></div>
<div class="abs" style="left:201px;top:735px;width:202px;height:1px;background:#a0a0a0"></div>
<div class="t" style="left:210.72px;top:718px;font-size:12px;letter-spacing:0.061px;">Bottom / Events / Open / Running</div>
<div class="abs" style="left:21px;top:747px;width:92px;height:23px;box-sizing:border-box;border:1px solid #d0d0d0;border-left:1px solid #6e6e6e;background:#f0f0f0;box-shadow:inset 1px 1px 0 #f8f8f8,inset -1px -1px 0 #f8f8f8"></div>
<div class="t" style="left:25px;top:750px;letter-spacing:-0.415px;color:#838383">10</div>
<div class="abs" style="left:122px;top:747px;width:931px;height:23px;box-sizing:border-box;border:1px solid #d0d0d0;background:#f0f0f0;box-shadow:inset 1px 1px 0 #f8f8f8,inset -1px -1px 0 #f8f8f8"></div>
<div class="t" style="left:125px;top:750px;letter-spacing:-0.263px;color:#838383">Mode : Open(100)</div>
<div class="btn" style="left:22px;top:787px;width:151px;height:23px;"></div>
<div class="t" style="left:26px;top:790px;letter-spacing:-0.168px;letter-spacing:-0.23px">aes_propEvents</div>
<svg style="left:159px;top:796px" width="10" height="6" viewBox="0 0 10 6"><path d="M0.5 0.5L5 5L9.5 0.5" fill="none" stroke="#444" stroke-width="1.1"/></svg>
<div class="btn" style="left:183px;top:787px;width:23px;height:23px"></div>
<div class="btn" style="left:223px;top:787px;width:23px;height:23px"></div>
<div class="btn" style="left:253px;top:787px;width:23px;height:23px"></div>
<div class="btn" style="left:938px;top:788px;width:23px;height:23px"></div>
<svg style="left:0;top:780px" width="1087" height="40" viewBox="0 780 1087 40">
<g transform="translate(194.9 798.2)"><g fill="#777"><circle r="6.4"/>
<rect x="-1.8" y="-8.1" width="3.6" height="16.2" rx="0.7"/>
<rect x="-1.8" y="-8.1" width="3.6" height="16.2" rx="0.7" transform="rotate(45)"/>
<rect x="-1.8" y="-8.1" width="3.6" height="16.2" rx="0.7" transform="rotate(90)"/>
<rect x="-1.8" y="-8.1" width="3.6" height="16.2" rx="0.7" transform="rotate(135)"/></g>
<circle r="3.3" fill="#e9e9e9" stroke="#3aa5a5" stroke-width="1.1"/></g>
<circle cx="234.1" cy="797.9" r="6.8" fill="#e6e6e6" stroke="#666" stroke-width="0.9"/>
<path d="M231.2 794.8L238 798L231.2 801.2Z" fill="#3aa5a5"/>
<circle cx="263.9" cy="797.9" r="6.4" fill="#eaeaea" stroke="#8a8a8a" stroke-width="0.9"/>
<rect x="261.7" y="795.8" width="4.4" height="4.4" fill="#3aa5a5"/>
<path d="M941.5 791H958V807.7H941.5Z" fill="#777"/>
<rect x="945.5" y="791" width="9" height="7.7" fill="#fff"/>
<rect x="945.5" y="802.3" width="9" height="5.4" fill="#fff"/>
<rect x="946.7" y="803.5" width="3" height="4.2" fill="#3aa5a5"/>
</svg>
<div class="btn" style="left:968px;top:788px;width:83px;height:23px;"></div>
<div class="t" style="left:968px;top:791px;letter-spacing:-0.083px;width:83px;text-align:center;">Print</div>
<div class="abs" style="left:0;top:841px;width:1079px;height:1px;background:#f8f8f8"></div>
<div class="abs" style="left:0;top:842px;width:1079px;height:41px;background:#aaaaaa"></div>
<div class="btn" style="left:20px;top:852px;width:83px;height:23px;box-shadow:0 0 0 1px #f0f0f0"></div>
<div class="t" style="left:20px;top:855px;letter-spacing:-0.355px;width:83px;text-align:center;">Help</div>
<div class="abs" style="left:790px;top:852px;width:169px;height:22px;box-sizing:border-box;background:#e1e1e1"></div>
<div class="t" style="left:792.63px;top:855px;letter-spacing:-0.268px;">aes_default</div>
<svg style="left:946px;top:861px" width="10" height="6" viewBox="0 0 10 6"><path d="M0.5 0.5L5 5L9.5 0.5" fill="none" stroke="#444" stroke-width="1.1"/></svg>
<div class="btn" style="left:967px;top:852px;width:83px;height:23px;box-shadow:0 0 0 1px #f0f0f0"></div>
<div class="t" style="left:967px;top:855px;letter-spacing:-0.218px;width:83px;text-align:center;">Close</div>
</body></html>
